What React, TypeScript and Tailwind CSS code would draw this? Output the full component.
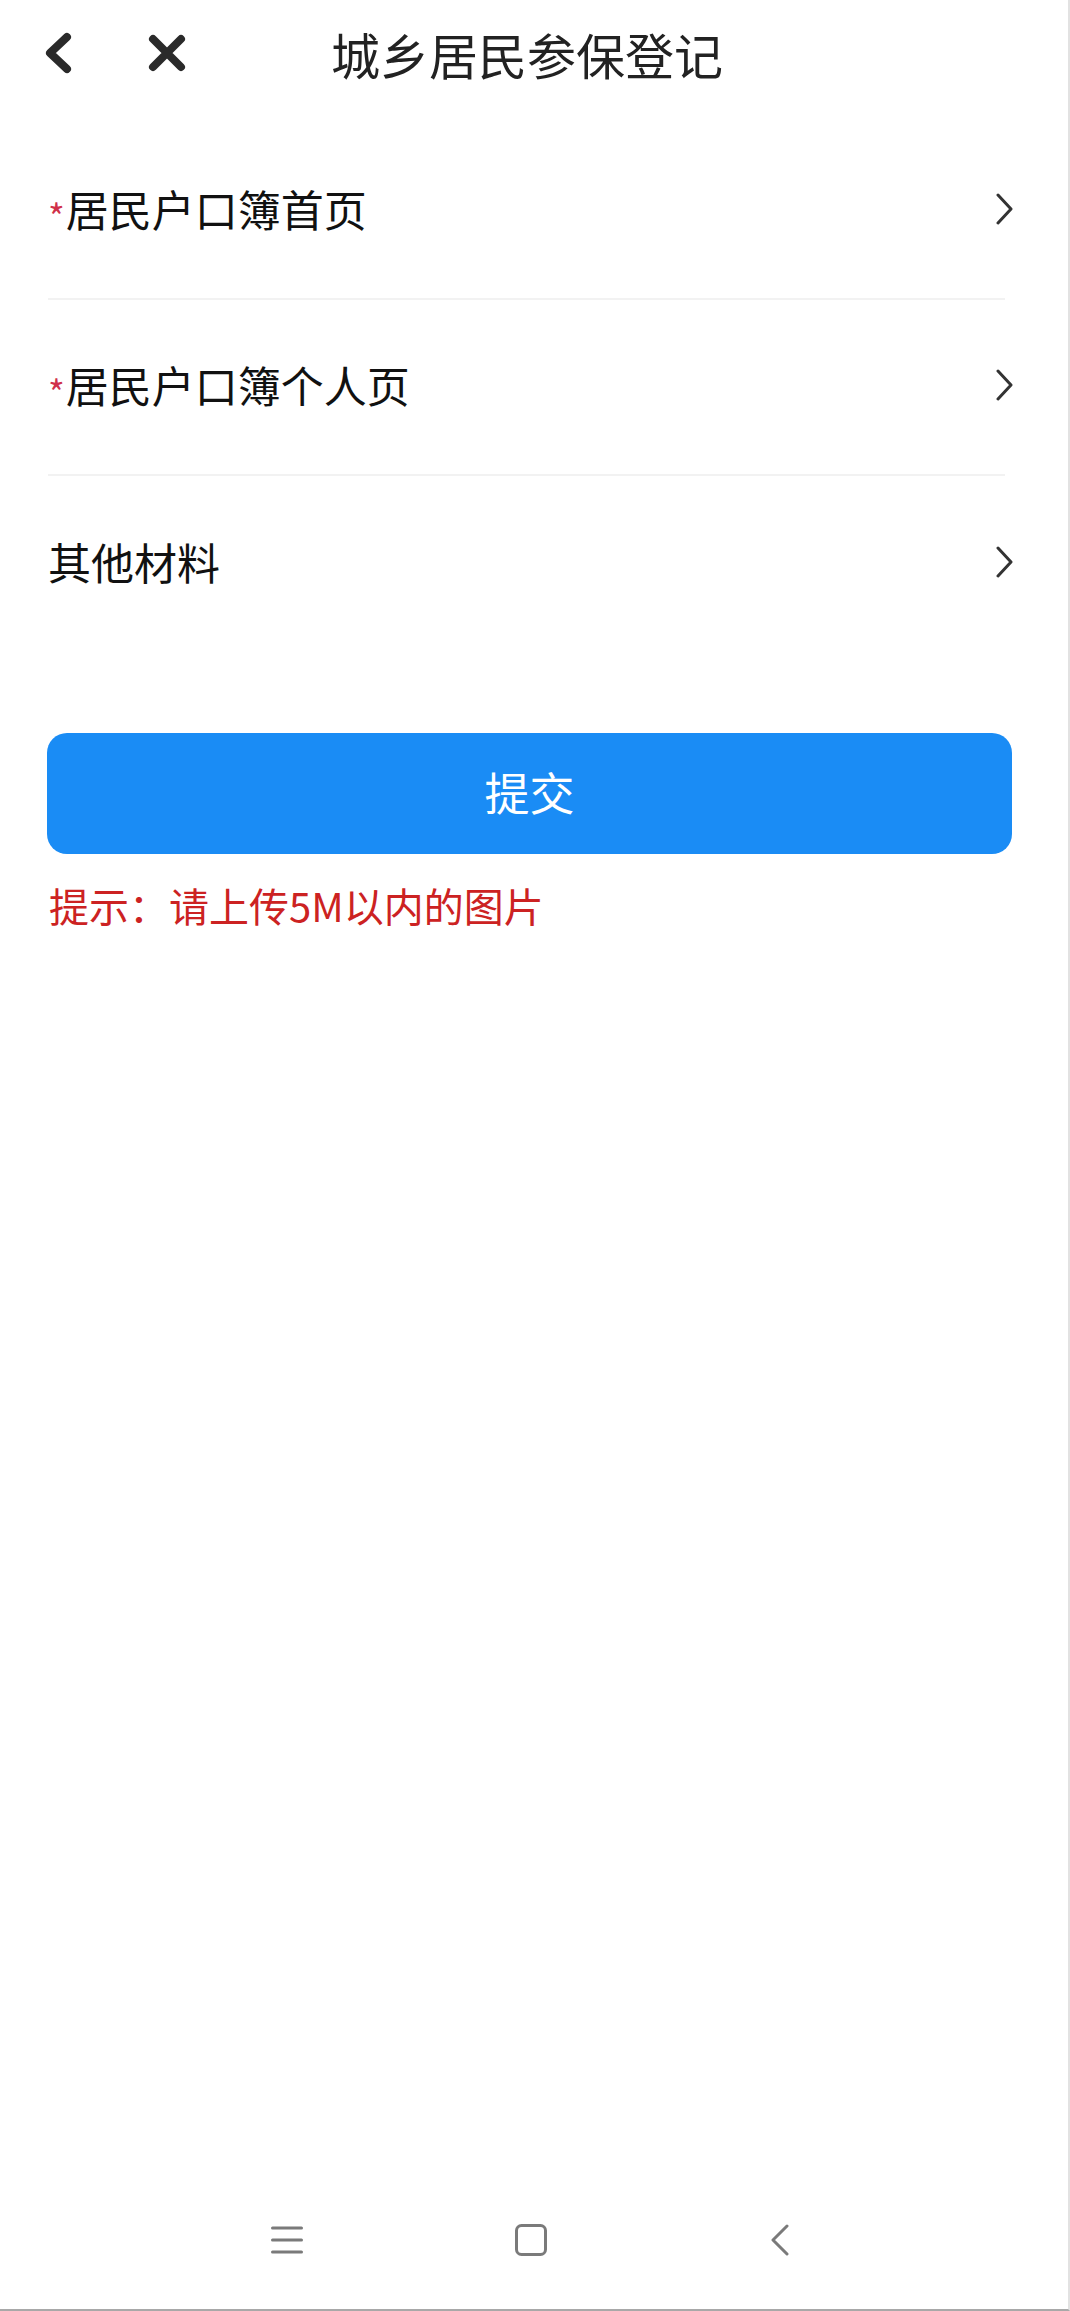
import { ReactNode } from 'react';

const FONT = { fontFamily: '"Noto Sans CJK SC", "Noto Sans", sans-serif' };

function ChevronRight() {
  return (
    <svg width="20" height="32" viewBox="0 0 20 32" fill="none">
      <path d="M3 2 L16 16 L3 30" stroke="#333" strokeWidth="3" strokeLinecap="round" strokeLinejoin="round" />
    </svg>
  );
}

// one upload row in the material list
function MaterialRow({ label, required, last }: { label: string; required?: boolean; last?: boolean }) {
  return (
    <div className={`flex items-center h-[176px] ${last ? '' : 'border-b-2 border-[#f2f2f2]'}`}>
      <div className="flex items-center flex-1 pb-[5px]">
        {required && <span className="text-[#d0304a] text-[36px] leading-none mt-[12px] mr-[1px]">*</span>}
        <span className="text-[43px] leading-none text-[#111]">{label}</span>
      </div>
      <div className="-mr-[10px] pb-[4px]">
        <ChevronRight />
      </div>
    </div>
  );
}

function NavIcon({ children }: { children: ReactNode }) {
  return <div className="flex items-center justify-center">{children}</div>;
}

export default function App() {
  return (
    <div
      className="h-[2311px] w-full bg-white flex flex-col border-b-2 border-b-[#a8a8a8] border-r-2 border-r-[#e2e2e2]"
      style={FONT}
    >
      {/* header */}
      <div className="grid grid-cols-[1fr_auto_1fr] items-center h-[106px]">
        <div className="flex items-center pl-[44px] gap-[76px]">
          <svg width="28" height="42" viewBox="0 0 28 42" fill="none">
            <path d="M23 5 L6 21 L23 37" stroke="#2a2a2a" strokeWidth="8" strokeLinecap="round" strokeLinejoin="round" />
          </svg>
          <svg width="38" height="38" viewBox="0 0 38 38" fill="none">
            <path d="M5 5 L33 33 M33 5 L5 33" stroke="#2a2a2a" strokeWidth="8" strokeLinecap="round" />
          </svg>
        </div>
        <h1 className="text-[49px] leading-none text-[#222] font-normal -ml-[14px]">城乡居民参保登记</h1>
        <div />
      </div>

      {/* list */}
      <div className="mt-[18px] ml-[48px] mr-[63px]">
        <MaterialRow label="居民户口簿首页" required />
        <MaterialRow label="居民户口簿个人页" required />
        <MaterialRow label="其他材料" last />
      </div>

      <button className="mt-[81px] ml-[47px] mr-[56px] h-[121px] rounded-[20px] bg-[#1a8cf5] text-white text-[45px] leading-none pb-[4px]">
        提交
      </button>

      <p className="mt-[27px] ml-[49px] text-[40px] leading-[48px] text-[#cc2222]">提示：请上传5M以内的图片</p>

      {/* system navigation bar */}
      <div className="mt-auto h-[138px] flex items-center pl-[271px]">
        <NavIcon>
          <svg width="32" height="28" viewBox="0 0 32 28" fill="none">
            <path d="M1.5 2 H30.5 M1.5 14 H30.5 M1.5 26 H30.5" stroke="#7a7a7a" strokeWidth="3" strokeLinecap="round" />
          </svg>
        </NavIcon>
        <div className="ml-[212px]">
          <NavIcon>
            <svg width="32" height="32" viewBox="0 0 32 32" fill="none">
              <rect x="1.5" y="1.5" width="29" height="29" rx="5" stroke="#7a7a7a" strokeWidth="3" />
            </svg>
          </NavIcon>
        </div>
        <div className="ml-[223px]">
          <NavIcon>
            <svg width="20" height="32" viewBox="0 0 20 32" fill="none">
              <path d="M17 2 L3 16 L17 30" stroke="#7a7a7a" strokeWidth="3" strokeLinecap="round" strokeLinejoin="round" />
            </svg>
          </NavIcon>
        </div>
      </div>
    </div>
  );
}
